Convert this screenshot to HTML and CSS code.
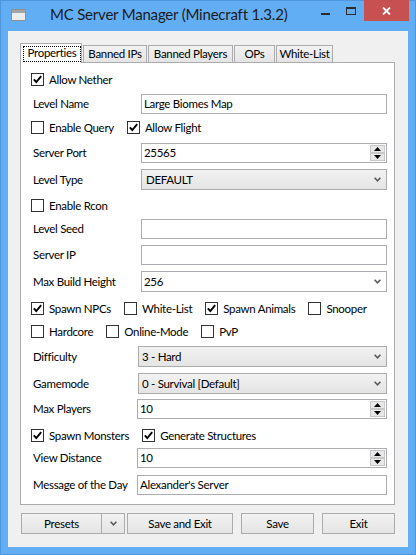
FILE: index.html
```html
<!DOCTYPE html>
<html>
<head>
<meta charset="utf-8">
<title>MC Server Manager</title>
<link rel="stylesheet" href="styles.css">
</head>
<body>
<div class="window">
  <div class="titlebar">
    <div class="app-icon"></div>
    <div class="title">MC Server Manager (Minecraft 1.3.2)</div>
    <div class="caption">
      <div class="cap-btn"><span class="min-glyph"></span></div>
      <div class="cap-btn"><span class="max-glyph"></span></div>
      <div class="cap-btn cap-close">
        <svg width="9" height="8" viewBox="0 0 9 8"><path d="M1 0.5 8 7.5M8 0.5 1 7.5" stroke="#fff" stroke-width="1.8" fill="none"/></svg>
      </div>
    </div>
  </div>
  <div class="client">
    <div class="tabs">
      <div class="tab active t-props"><span class="focus">Properties</span></div>
      <div class="tab t-ips">Banned IPs</div>
      <div class="tab t-players">Banned Players</div>
      <div class="tab t-ops">OPs</div>
      <div class="tab t-wl">White-List</div>
    </div>
    <div class="panel">
      <div class="cbrow">
        <span class="cb"><span class="box"><svg class="tick" width="11" height="11" viewBox="0 0 11 11"><path d="M1.8 5.3 4.3 8 9.2 2.2" fill="none" stroke="#000" stroke-width="1.9"/></svg></span>Allow Nether</span>
      </div>
      <div class="row">
        <span class="lbl">Level Name</span>
        <div class="tb"><span class="val">Large Biomes Map</span></div>
      </div>
      <div class="cbrow">
        <span class="cb"><span class="box"></span>Enable Query</span>
        <span class="cb"><span class="box"><svg class="tick" width="11" height="11" viewBox="0 0 11 11"><path d="M1.8 5.3 4.3 8 9.2 2.2" fill="none" stroke="#000" stroke-width="1.9"/></svg></span>Allow Flight</span>
      </div>
      <div class="row">
        <span class="lbl">Server Port</span>
        <div class="tb"><span class="val">25565</span>
          <div class="spinner">
            <span class="sb"><svg width="7" height="4" viewBox="0 0 7 4"><path d="M0 4 3.5 0 7 4Z" fill="#000"/></svg></span>
            <span class="sb"><svg width="7" height="4" viewBox="0 0 7 4"><path d="M0 0 3.5 4 7 0Z" fill="#000"/></svg></span>
          </div>
        </div>
      </div>
      <div class="row">
        <span class="lbl">Level Type</span>
        <div class="dd"><span class="val">DEFAULT</span><svg class="chev" width="7" height="5" viewBox="0 0 7 5"><path d="M0.6 0.8 3.5 3.8 6.4 0.8" fill="none" stroke="#5a5a5a" stroke-width="1.6"/></svg></div>
      </div>
      <div class="cbrow">
        <span class="cb"><span class="box"></span>Enable Rcon</span>
      </div>
      <div class="row">
        <span class="lbl">Level Seed</span>
        <div class="tb"><span class="val"></span></div>
      </div>
      <div class="row">
        <span class="lbl">Server IP</span>
        <div class="tb"><span class="val"></span></div>
      </div>
      <div class="row">
        <span class="lbl">Max Build Height</span>
        <div class="cbx"><span class="val">256</span><svg class="chev" width="7" height="5" viewBox="0 0 7 5"><path d="M0.6 0.8 3.5 3.8 6.4 0.8" fill="none" stroke="#5a5a5a" stroke-width="1.6"/></svg></div>
      </div>
      <div class="cbrow">
        <span class="cb"><span class="box"><svg class="tick" width="11" height="11" viewBox="0 0 11 11"><path d="M1.8 5.3 4.3 8 9.2 2.2" fill="none" stroke="#000" stroke-width="1.9"/></svg></span>Spawn NPCs</span>
        <span class="cb"><span class="box"></span>White-List</span>
        <span class="cb"><span class="box"><svg class="tick" width="11" height="11" viewBox="0 0 11 11"><path d="M1.8 5.3 4.3 8 9.2 2.2" fill="none" stroke="#000" stroke-width="1.9"/></svg></span>Spawn Animals</span>
        <span class="cb"><span class="box"></span>Snooper</span>
      </div>
      <div class="cbrow">
        <span class="cb"><span class="box"></span>Hardcore</span>
        <span class="cb"><span class="box"></span>Online-Mode</span>
        <span class="cb"><span class="box"></span>PvP</span>
      </div>
      <div class="row">
        <span class="lbl mid">Difficulty</span>
        <div class="dd narrow"><span class="val">3 - Hard</span><svg class="chev" width="7" height="5" viewBox="0 0 7 5"><path d="M0.6 0.8 3.5 3.8 6.4 0.8" fill="none" stroke="#5a5a5a" stroke-width="1.6"/></svg></div>
      </div>
      <div class="row">
        <span class="lbl mid">Gamemode</span>
        <div class="dd narrow"><span class="val">0 - Survival [Default]</span><svg class="chev" width="7" height="5" viewBox="0 0 7 5"><path d="M0.6 0.8 3.5 3.8 6.4 0.8" fill="none" stroke="#5a5a5a" stroke-width="1.6"/></svg></div>
      </div>
      <div class="row">
        <span class="lbl low">Max Players</span>
        <div class="tb"><span class="val">10</span>
          <div class="spinner">
            <span class="sb"><svg width="7" height="4" viewBox="0 0 7 4"><path d="M0 4 3.5 0 7 4Z" fill="#000"/></svg></span>
            <span class="sb"><svg width="7" height="4" viewBox="0 0 7 4"><path d="M0 0 3.5 4 7 0Z" fill="#000"/></svg></span>
          </div>
        </div>
      </div>
      <div class="cbrow">
        <span class="cb"><span class="box"><svg class="tick" width="11" height="11" viewBox="0 0 11 11"><path d="M1.8 5.3 4.3 8 9.2 2.2" fill="none" stroke="#000" stroke-width="1.9"/></svg></span>Spawn Monsters</span>
        <span class="cb"><span class="box"><svg class="tick" width="11" height="11" viewBox="0 0 11 11"><path d="M1.8 5.3 4.3 8 9.2 2.2" fill="none" stroke="#000" stroke-width="1.9"/></svg></span>Generate Structures</span>
      </div>
      <div class="row">
        <span class="lbl low">View Distance</span>
        <div class="tb"><span class="val">10</span>
          <div class="spinner">
            <span class="sb"><svg width="7" height="4" viewBox="0 0 7 4"><path d="M0 4 3.5 0 7 4Z" fill="#000"/></svg></span>
            <span class="sb"><svg width="7" height="4" viewBox="0 0 7 4"><path d="M0 0 3.5 4 7 0Z" fill="#000"/></svg></span>
          </div>
        </div>
      </div>
      <div class="row">
        <span class="lbl low">Message of the Day</span>
        <div class="tb"><span class="val">Alexander's Server</span></div>
      </div>
    </div>
    <div class="buttons">
      <div class="btn split">
        <span class="split-main">Presets</span>
        <span class="split-arrow"><svg width="7" height="5" viewBox="0 0 7 5"><path d="M0.6 0.8 3.5 3.8 6.4 0.8" fill="none" stroke="#5a5a5a" stroke-width="1.6"/></svg></span>
      </div>
      <div class="btn b-saveexit">Save and Exit</div>
      <div class="btn b-save">Save</div>
      <div class="btn b-exit">Exit</div>
    </div>
  </div>
</div>
</body>
</html>
```
FILE: styles.css
```css
* { box-sizing: border-box; }
html, body { margin: 0; padding: 0; }
body {
  width: 416px;
  height: 555px;
  overflow: hidden;
  font-family: Lato, "Liberation Sans", sans-serif;
  font-size: 11.5px;
  letter-spacing: -0.3px;
  color: #000;
}
.window {
  width: 416px;
  height: 555px;
  background: #62aef5;
  box-shadow: inset 0 0 0 1px #4e97df;
  display: flex;
  flex-direction: column;
}
.titlebar {
  height: 31px;
  flex: none;
  display: flex;
  align-items: flex-start;
}
.app-icon {
  width: 15px;
  height: 12px;
  margin: 9px 0 0 11px;
  border: 1px solid #8f8f8f;
  background: linear-gradient(#a4a4a4 0, #a4a4a4 3px, #ececec 3px);
  flex: none;
}
.title {
  margin: 4px 0 0 24px;
  font-size: 15px;
  letter-spacing: -0.2px;
  line-height: 20px;
  color: #1c1c1c;
  white-space: nowrap;
}
.caption {
  margin-left: auto;
  margin-right: 7px;
  display: flex;
}
.cap-btn {
  width: 26px;
  height: 21px;
  display: flex;
  justify-content: center;
}
.min-glyph {
  width: 9px;
  height: 2px;
  margin-top: 13px;
  background: #2b2b2b;
}
.max-glyph {
  width: 10px;
  height: 8px;
  margin-top: 7px;
  border: 1px solid #2b2b2b;
  border-top-width: 2px;
}
.cap-close {
  width: 45px;
  background: #c75050;
  align-items: center;
}
.client {
  flex: 1;
  margin: 0 8px 8px 8px;
  background: #f0f0f0;
  padding: 12px 13px 0 12px;
  display: flex;
  flex-direction: column;
}
.tabs {
  height: 19px;
  display: flex;
  align-items: flex-end;
  flex: none;
}
.tab {
  height: 17px;
  border: 1px solid #acacac;
  border-bottom: 0;
  background: linear-gradient(#f2f2f2, #e4e4e4);
  margin-left: 1px;
  text-align: center;
  line-height: 16px;
  white-space: nowrap;
  flex: none;
}
.tab.active {
  height: 20px;
  margin-left: 0;
  margin-bottom: -1px;
  background: #fff;
  position: relative;
  z-index: 1;
  padding: 2px 0 0 2px;
}
.focus {
  display: block;
  height: 16px;
  border: 1px dotted #000;
  line-height: 12px;
  padding-bottom: 2px;
  text-align: center;
}
.t-props { width: 62px; }
.t-ips { width: 64px; }
.t-players { width: 85px; }
.t-ops { width: 41px; }
.t-wl { width: 57px; }
.panel {
  height: 443px;
  flex: none;
  border: 1px solid #acacac;
  background: #fff;
  padding: 6px 7px 0 0;
  display: grid;
  grid-template-columns: minmax(0, 1fr);
  grid-template-rows: 25px 23px 26px 26px 26px 24px 26px 26px 27px 23px 25px 27px 26px 26px 23px 27px 20px;
  align-content: start;
}
.row {
  display: flex;
  align-items: center;
  align-self: start;
  min-width: 0;
}
.lbl {
  width: 120px;
  padding-left: 12px;
  line-height: 20px;
  white-space: nowrap;
  flex: none;
}
.lbl.mid { width: 117px; }
.lbl.low { width: 116px; }
.tb {
  flex: 1;
  min-width: 0;
  height: 20px;
  border: 1px solid #abadb3;
  background: #fff;
  padding-left: 2px;
  display: flex;
  line-height: 18px;
}
.val {
  flex: 1;
  white-space: nowrap;
  overflow: hidden;
}
.spinner {
  width: 15px;
  margin: 1px 1px 1px 0;
  display: flex;
  flex-direction: column;
  flex: none;
}
.sb {
  height: 8px;
  background: #e8e8e8;
  border: 1px solid #c8c8c8;
  display: flex;
  align-items: center;
  justify-content: center;
}
.dd, .cbx {
  flex: 1;
  min-width: 0;
  height: 21px;
  border: 1px solid #acacac;
  background: linear-gradient(#f2f2f2, #e4e4e4);
  display: flex;
  align-items: center;
  padding-left: 4px;
  line-height: 19px;
}
.dd.narrow { padding-left: 3px; }
.cbx {
  background: #fff;
  border-color: #abadb3;
  padding-left: 2px;
}
.chev {
  margin-right: 5px;
  flex: none;
}
.cbrow {
  display: flex;
  align-items: center;
  align-self: start;
  height: 20px;
  padding-left: 10px;
  gap: 13px;
  min-width: 0;
}
.cb {
  display: flex;
  align-items: center;
  white-space: nowrap;
}
.box {
  width: 13px;
  height: 13px;
  border: 1px solid #333;
  background: #fff;
  margin-right: 5px;
  flex: none;
  display: flex;
  align-items: center;
  justify-content: center;
}
.buttons {
  display: flex;
  margin-top: 8px;
  padding-left: 1px;
  height: 21px;
  flex: none;
}
.btn {
  height: 21px;
  border: 1px solid #acacac;
  background: linear-gradient(#f2f2f2, #e4e4e4);
  display: flex;
  align-items: center;
  justify-content: center;
  white-space: nowrap;
  flex: none;
}
.split {
  width: 104px;
  justify-content: flex-start;
  align-items: stretch;
}
.split-main {
  width: 79px;
  display: flex;
  align-items: center;
  justify-content: center;
}
.split-arrow {
  flex: 1;
  border-left: 1px solid #acacac;
  display: flex;
  align-items: center;
  justify-content: center;
}
.b-saveexit { width: 106px; margin-left: 2px; }
.b-save { width: 73px; margin-left: 8px; }
.b-exit { width: 73px; margin-left: 8px; }
```
